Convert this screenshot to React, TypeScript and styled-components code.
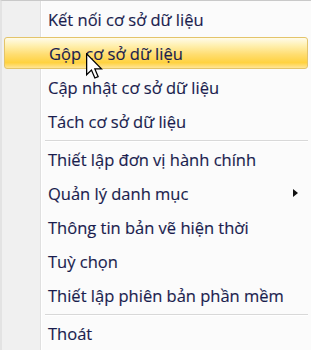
import React from "react";
import styled, { createGlobalStyle } from "styled-components";

const GlobalStyle = createGlobalStyle`
  html, body {
    margin: 0;
    padding: 0;
    background: #ffffff;
  }
`;

const MenuStyles = styled.div`
  position: relative;
  box-sizing: border-box;
  width: 311px;
  height: 350px;
  overflow: hidden;
  background-color: #fbfbfb;
  border-top: 1px solid #c9c9c9;
  border-left: 2px solid #e3e3e3;
  padding: 1px 3px 0 1px;
  font-family: "Open Sans", "Liberation Sans", sans-serif;
  font-size: 16.5px;
  color: #1a1d4e;

  &::before {
    content: "";
    position: absolute;
    top: 0;
    bottom: 0;
    left: 0;
    width: 38px;
    background-color: #f0f0f0;
    border-right: 1px solid #e0e0e0;
    box-shadow: 1px 0 0 #ffffff;
  }
`;

const Item = styled.div<{ $active?: boolean }>`
  position: relative;
  box-sizing: border-box;
  display: flex;
  align-items: center;
  padding-left: 44px;
  padding-right: 9px;
  border-radius: 3px;
  border: 1px solid ${(p) => (p.$active ? "#e3c46a" : "transparent")};
  background: ${(p) =>
    p.$active
      ? "linear-gradient(to bottom, #fffbea 0%, #fff0b0 25%, #ffdd70 55%, #ffd240 82%, #ffe596 100%)"
      : "transparent"};
  margin: ${(p) => (p.$active ? "1px 0 1px 1px" : "0")};
  height: ${(p) => (p.$active ? "32px" : "34px")};
  white-space: nowrap;
  -webkit-text-stroke: 0.15px #1a1d4e;
`;

const Label = styled.span`
  flex: 1;
`;

const SubArrow = styled.span`
  width: 0;
  height: 0;
  border-top: 4.5px solid transparent;
  border-bottom: 4.5px solid transparent;
  border-left: 5px solid #111111;
`;

const Separator = styled.div`
  position: relative;
  height: 4px;
  margin-left: 42px;
  display: flex;
  flex-direction: column;
  justify-content: center;

  &::after {
    content: "";
    display: block;
    height: 1px;
    background-color: #d8d8d8;
    box-shadow: 0 1px 0 #ffffff;
  }
`;

const Cursor = styled.svg`
  position: absolute;
  left: 84px;
  top: 52px;
`;

type Entry = { label?: string; sep?: boolean; active?: boolean; sub?: boolean };

const entries: Entry[] = [
  { label: "Kết nối cơ sở dữ liệu" },
  { label: "Gộp cơ sở dữ liệu", active: true },
  { label: "Cập nhật cơ sở dữ liệu" },
  { label: "Tách cơ sở dữ liệu" },
  { sep: true },
  { label: "Thiết lập đơn vị hành chính" },
  { label: "Quản lý danh mục", sub: true },
  { label: "Thông tin bản vẽ hiện thời" },
  { label: "Tuỳ chọn" },
  { label: "Thiết lập phiên bản phần mềm" },
  { sep: true },
  { label: "Thoát" },
];

const App: React.FC = () => {
  return (
    <>
      <GlobalStyle />
      <MenuStyles>
        {entries.map((e, i) =>
          e.sep ? (
            <Separator key={i} />
          ) : (
            <Item key={i} $active={e.active}>
              <Label>{e.label}</Label>
              {e.sub && <SubArrow />}
            </Item>
          )
        )}
        <Cursor width="19" height="27" viewBox="0 0 15 21">
          <path
            d="M0.5 0.5 L0.5 17 L4.3 13.3 L7 19.6 L9.6 18.5 L7 12.4 L12.2 12.4 Z"
            fill="#ffffff"
            stroke="#000000"
            strokeWidth="1"
            strokeLinejoin="miter"
          />
        </Cursor>
      </MenuStyles>
    </>
  );
};

export default App;
